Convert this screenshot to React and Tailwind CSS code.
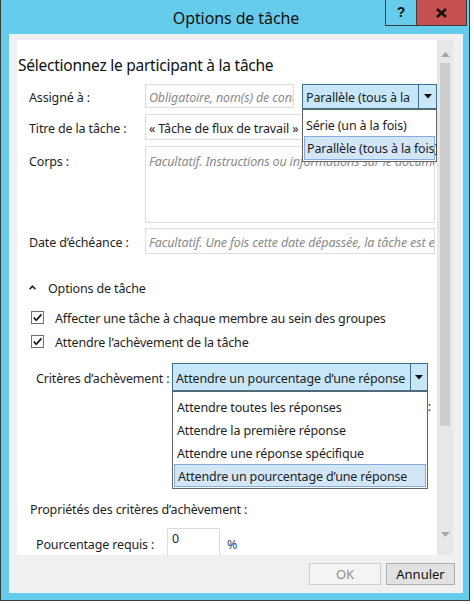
import React from "react";

const font = { fontFamily: '"Noto Sans", "Liberation Sans", sans-serif' };

function Caret({ className = "" }) {
  return (
    <svg width="8" height="5" viewBox="0 0 8 5" className={className}>
      <path d="M0 0 L8 0 L4 4.5 Z" fill="#111" />
    </svg>
  );
}

function Check() {
  return (
    <div className="w-[13px] h-[13px] border border-[#707070] bg-white flex items-center justify-center shrink-0">
      <svg width="11" height="11" viewBox="0 0 11 11">
        <path d="M1.8 5.6 L4.3 8.2 L9.4 2.4" stroke="#1b1b1b" strokeWidth="1.7" fill="none" />
      </svg>
    </div>
  );
}

export default function App() {
  return (
    <div className="w-[474px] h-[604px] bg-white text-[#1e1e1e]" style={font}>
      <div className="w-[470px] h-[601px] bg-[#66CCEC] border-x border-b border-[#3a3a3a] flex flex-col">
        {/* title bar */}
        <div className="relative h-[34px] shrink-0 flex items-center justify-center">
          <span className="text-[16px] tracking-[-0.1px] leading-none text-[#111] pt-[2px] pl-[2px]">Options de tâche</span>
          <div className="absolute top-0 left-[384px] flex h-[26px] border border-[#3a3a3a] border-t-0">
            <div className="w-[30px] flex items-center justify-center font-bold text-[14px] text-[#111]" style={{ fontFamily: '"Liberation Sans", sans-serif' }}>?</div>
            <div className="w-[50px] bg-[#C75050] border-l border-[#3a3a3a] flex items-center justify-center">
              <svg width="11" height="10" viewBox="0 0 11 10">
                <path d="M1 1 L10 9 M10 1 L1 9" stroke="#111" strokeWidth="2.4" />
              </svg>
            </div>
          </div>
        </div>
        {/* face */}
        <div className="ml-[8px] mr-[6px] h-[559px] bg-[#F0F0F0] flex flex-col pl-[8px] pr-[10px] pt-[6px]">
          <div className="h-[515px] bg-white flex">
            {/* scroll content */}
            <div className="relative w-[420px] overflow-hidden flex flex-col text-[12.5px] tracking-[-0.15px] whitespace-nowrap">
              <div className="mt-[10px] h-[26px] text-[15.5px] tracking-[-0.25px] leading-[26px] pt-[2px] pl-[1px] text-[#111]">
                Sélectionnez le participant à la tâche
              </div>
              {/* Assigné */}
              <div className="mt-[8px] h-[24px] flex items-center">
                <div className="w-[128px] pl-[12px] pt-[5px] shrink-0">Assigné à :</div>
                <div className="w-[149px] h-[24px] border border-[#DDDDDD] flex items-center pl-[3px] pt-[4px] italic text-[#8a8a8a] overflow-hidden">
                  Obligatoire, nom(s) de contacts
                </div>
                <div className="relative ml-[8px] w-[135px] h-[25px]">
                  <div className="w-full h-full border border-[#3F6F8F] bg-[#C7E6F8] flex">
                    <div className="flex-1 flex items-center pl-[3px] pt-[4px] overflow-hidden">Parallèle (tous à la</div>
                    <div className="w-[18px] border-l border-[#3F6F8F] flex items-center justify-center">
                      <Caret />
                    </div>
                  </div>
                  <div className="absolute top-[25px] left-0 w-[135px] z-10 bg-white border border-[#646464] flex flex-col px-[1px] pt-[3px] pb-[1px]">
                    <div className="h-[23px] flex items-center pl-[2px] pt-[4px]">Série (un à la fois)</div>
                    <div className="h-[24px] flex items-center pl-[2px] pt-[4px] bg-[#D3E6F8] border border-[#84ACDD]">Parallèle (tous à la fois)</div>
                  </div>
                </div>
              </div>
              {/* Titre */}
              <div className="mt-[6px] h-[26px] flex items-center">
                <div className="w-[128px] pl-[12px] pt-[5px] shrink-0">Titre de la tâche :</div>
                <div className="w-[290px] h-[26px] border border-[#DDDDDD] flex items-center pl-[3px] pt-[4px]">
                  « Tâche de flux de travail »
                </div>
              </div>
              {/* Corps */}
              <div className="mt-[6px] h-[77px] flex">
                <div className="w-[128px] pl-[12px] shrink-0 pt-[7px]">Corps :</div>
                <div className="w-[290px] h-[77px] border border-[#DDDDDD] pl-[3px] pt-[6px] italic text-[#8a8a8a] overflow-hidden">
                  Facultatif. Instructions ou informations sur le document
                </div>
              </div>
              {/* Date */}
              <div className="mt-[5px] h-[26px] flex items-center">
                <div className="w-[128px] pl-[12px] pt-[5px] shrink-0">Date d’échéance :</div>
                <div className="w-[290px] h-[26px] border border-[#DDDDDD] flex items-center pl-[3px] pt-[4px] italic text-[#8a8a8a] overflow-hidden">
                  Facultatif. Une fois cette date dépassée, la tâche est en retard
                </div>
              </div>
              {/* Options */}
              <div className="mt-[23px] h-[20px] flex items-center pl-[12px]">
                <svg width="7" height="5" viewBox="0 0 7 5" className="mr-[12px]">
                  <path d="M0.6 4.2 L3.5 1.2 L6.4 4.2" stroke="#222" strokeWidth="1.6" fill="none" />
                </svg>
                <span className="pt-[5px]">Options de tâche</span>
              </div>
              <div className="mt-[10px] h-[20px] flex items-center pl-[14px] gap-[11px]">
                <Check />
                <span className="pt-[5px]">Affecter une tâche à chaque membre au sein des groupes</span>
              </div>
              <div className="mt-[4px] h-[20px] flex items-center pl-[14px] gap-[11px]">
                <Check />
                <span className="pt-[5px]">Attendre l’achèvement de la tâche</span>
              </div>
              {/* Critères */}
              <div className="mt-[12px] h-[28px] flex items-center">
                <div className="w-[155px] pl-[19px] pt-[5px] shrink-0">Critères d’achèvement :</div>
                <div className="relative w-[256px] h-[28px]">
                  <div className="w-full h-full border border-[#3F6F8F] bg-[#C7E6F8] flex">
                    <div className="flex-1 flex items-center pl-[3px] pt-[4px] overflow-hidden">Attendre un pourcentage d’une réponse</div>
                    <div className="w-[17px] border-l border-[#3F6F8F] flex items-center justify-center">
                      <Caret />
                    </div>
                  </div>
                  <div className="absolute top-[28px] left-0 w-[256px] z-10 bg-white border border-[#646464] flex flex-col px-[1px] pt-[3px] pb-[1px]">
                    <div className="h-[23px] flex items-center pl-[3px] pt-[4px]">Attendre toutes les réponses</div>
                    <div className="h-[23px] flex items-center pl-[3px] pt-[4px]">Attendre la première réponse</div>
                    <div className="h-[23px] flex items-center pl-[3px] pt-[4px]">Attendre une réponse spécifique</div>
                    <div className="h-[23px] flex items-center pl-[3px] pt-[4px] bg-[#D3E6F8] border border-[#84ACDD]">Attendre un pourcentage d’une réponse</div>
                  </div>
                </div>
              </div>
              <div className="mt-[4px] h-[20px] flex items-center justify-end pr-[6px] text-[#1e1e1e]">
                <span className="pt-[5px]">Réponse requise :</span>
              </div>
              {/* Propriétés */}
              <div className="mt-[83px] h-[20px] flex items-center pl-[13px]">
                <span className="pt-[5px]">Propriétés des critères d’achèvement :</span>
              </div>
              <div className="mt-[10px] h-[30px] flex items-start">
                <div className="w-[150px] pl-[19px] shrink-0 pt-[8px]">Pourcentage requis :</div>
                <div className="w-[53px] h-[30px] border border-[#DDDDDD] pl-[4px] pt-[1px]">0</div>
                <div className="ml-[7px] pt-[8px] text-[#2a4a6a]">%</div>
              </div>
            </div>
            {/* scrollbar */}
            <div className="w-[16px] bg-[#E8E8E8] flex flex-col items-center">
              <div className="h-[23px] flex items-center justify-center pt-[6px]">
                <svg width="9" height="5" viewBox="0 0 9 5"><path d="M0 5 L4.5 0 L9 5 Z" fill="#A6A6A6" /></svg>
              </div>
              <div className="w-[10px] h-[363px] bg-[#CDCDCD]" />
              <div className="flex-1" />
              <div className="h-[24px] flex items-start justify-center pt-[1px]">
                <svg width="9" height="5" viewBox="0 0 9 5"><path d="M0 0 L4.5 5 L9 0 Z" fill="#A6A6A6" /></svg>
              </div>
            </div>
          </div>
          {/* footer */}
          <div className="mt-[8px] flex justify-end gap-[5px] text-[13px]">
            <div className="w-[72px] h-[22px] border border-[#CCCCCC] bg-[#F4F4F4] text-[#8f8f8f] flex items-center justify-center pt-[2px]">OK</div>
            <div className="w-[69px] h-[22px] border border-[#ADADAD] bg-[#E1E1E1] text-[#111] flex items-center justify-center pt-[2px] mr-[-2px]">Annuler</div>
          </div>
        </div>
      </div>
    </div>
  );
}
